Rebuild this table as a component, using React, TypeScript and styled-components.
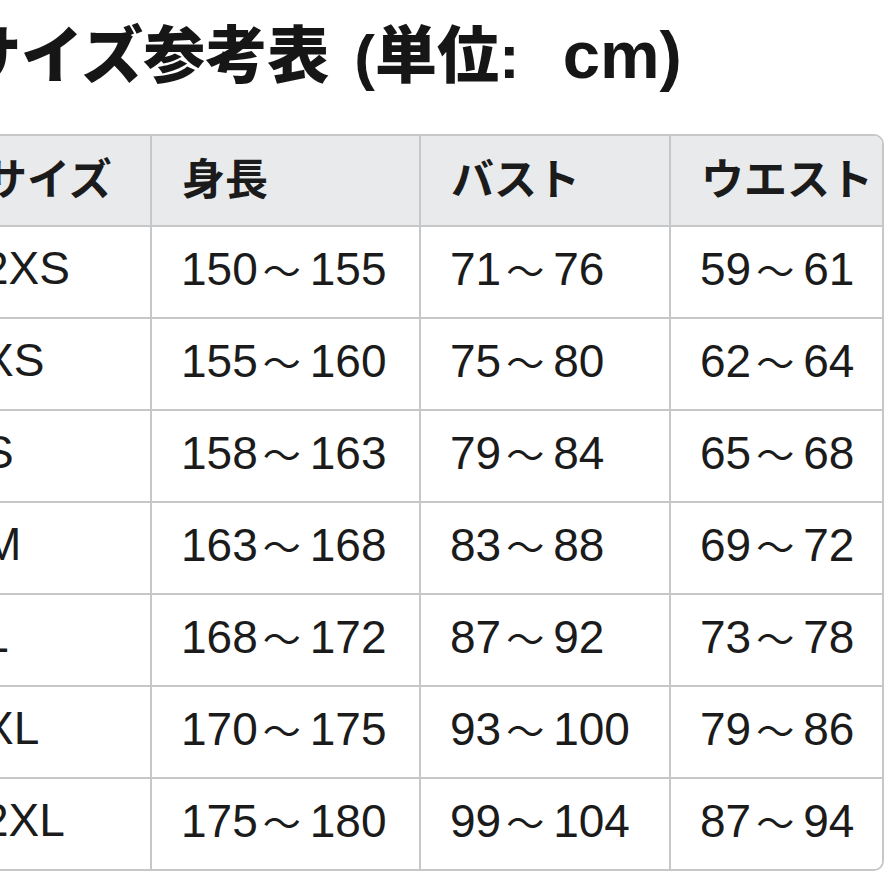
import styled, { createGlobalStyle } from "styled-components";

const GlobalStyle = createGlobalStyle`
	html, body {
		margin: 0;
		padding: 0;
		background: #fff;
	}
	body {
		font-family: "Liberation Sans", "Noto Sans CJK JP", sans-serif;
		color: #1b1b1b;
		overflow: hidden;
	}
`;

const Page = styled.div`
	width: 932px;
	margin-left: -48px;
	padding-top: 18px;
`;

const Title = styled.h1`
	margin: 0 0 0 7px;
	font-family: "Liberation Sans", "Noto Sans CJK JP", sans-serif;
	font-size: 62px;
	font-weight: 900;
	line-height: 74px;
	word-spacing: 8px;
	color: #161616;
	white-space: nowrap;
`;

const Unit = styled.span`
	margin-left: 43px;
	font-size: 67px;
	font-weight: 700;
`;

const Frame = styled.div`
	margin-top: 40px;
	border: 2px solid #c6c7c8;
	border-radius: 10px;
	overflow: hidden;
`;

const Row = styled.div<{ $head?: boolean; $last?: boolean }>`
	display: grid;
	grid-template-columns: 196px 269px 250px 1fr;
	height: ${(p) => (p.$head ? 89 : 90)}px;
	background: ${(p) => (p.$head ? "#e9eaeb" : "#fff")};
	border-bottom: ${(p) => (p.$last ? "none" : "2px solid #c6c7c8")};
`;

const Cell = styled.div<{ $head?: boolean }>`
	display: flex;
	align-items: center;
	padding-left: ${(p) => (p.$head ? "30px" : "29px")};
	padding-bottom: ${(p) => (p.$head ? "9px" : "8px")};
	border-left: 2px solid #c6c7c8;
	font-family: "Liberation Sans", "Noto Sans CJK JP", sans-serif;
	font-size: ${(p) => (p.$head ? "43px" : "46px")};
	font-weight: ${(p) => (p.$head ? 700 : 400)};
	color: #1b1b1b;
	white-space: nowrap;
	overflow: hidden;
	&:first-child {
		border-left: none;
	}
`;

const Tilde = styled.span`
	font-family: "Noto Sans CJK JP", sans-serif;
	font-size: 38px;
	margin: 0 9px 0 5px;
`;

const headers = ["サイズ", "身長", "バスト", "ウエスト"];

const rows = [
	["2XS", "150～155", "71～76", "59～61"],
	["XS", "155～160", "75～80", "62～64"],
	["S", "158～163", "79～84", "65～68"],
	["M", "163～168", "83～88", "69～72"],
	["L", "168～172", "87～92", "73～78"],
	["XL", "170～175", "93～100", "79～86"],
	["2XL", "175～180", "99～104", "87～94"],
];

const Range = ({ text }: { text: string }) => {
	const parts = text.split("～");
	if (parts.length < 2) return <>{text}</>;
	return (
		<span>
			{parts[0]}
			<Tilde>～</Tilde>
			{parts[1]}
		</span>
	);
};

const App = () => {
	return (
		<>
			<GlobalStyle />
			<Page>
				<Title>
					サイズ参考表 (単位:<Unit>cm)</Unit>
				</Title>
				<Frame>
					<Row $head>
						{headers.map((h) => (
							<Cell $head key={h}>
								{h}
							</Cell>
						))}
					</Row>
					{rows.map((r, i) => (
						<Row key={r[0]} $last={i === rows.length - 1}>
							{r.map((c, j) => (
								<Cell key={j}>
									<Range text={c} />
								</Cell>
							))}
						</Row>
					))}
				</Frame>
			</Page>
		</>
	);
};

export default App;
